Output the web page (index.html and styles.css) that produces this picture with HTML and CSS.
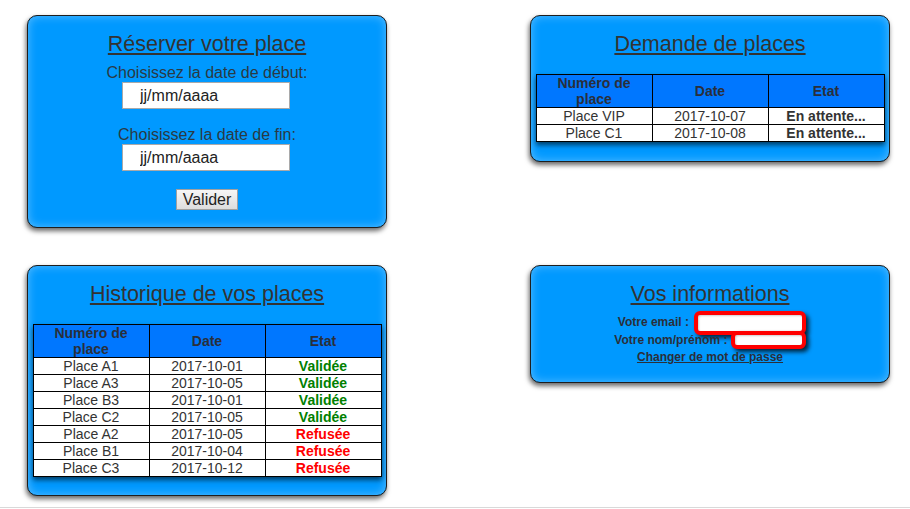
FILE: index.html
```html
<!DOCTYPE html>
<html lang="fr">
<head>
<meta charset="utf-8">
<title>Espace membre</title>
<link rel="stylesheet" href="styles.css">
</head>
<body>
<div class="page">
  <div class="grid">
    <section class="card card-reserve">
      <h2 class="card-title">Réserver votre place</h2>
      <div class="field-label">Choisissez la date de début:</div>
      <input class="date-input" type="text" value="jj/mm/aaaa">
      <div class="field-label field-label-gap">Choisissez la date de fin:</div>
      <input class="date-input" type="text" value="jj/mm/aaaa">
      <div class="btn-row"><button class="btn" type="button">Valider</button></div>
    </section>

    <section class="card card-requests">
      <h2 class="card-title">Demande de places</h2>
      <table class="places">
        <thead>
          <tr><th>Numéro de place</th><th>Date</th><th>Etat</th></tr>
        </thead>
        <tbody>
          <tr><td>Place VIP</td><td>2017-10-07</td><td class="pending">En attente...</td></tr>
          <tr><td>Place C1</td><td>2017-10-08</td><td class="pending">En attente...</td></tr>
        </tbody>
      </table>
    </section>

    <section class="card card-history">
      <h2 class="card-title">Historique de vos places</h2>
      <table class="places">
        <thead>
          <tr><th>Numéro de place</th><th>Date</th><th>Etat</th></tr>
        </thead>
        <tbody>
          <tr><td>Place A1</td><td>2017-10-01</td><td class="ok">Validée</td></tr>
          <tr><td>Place A3</td><td>2017-10-05</td><td class="ok">Validée</td></tr>
          <tr><td>Place B3</td><td>2017-10-01</td><td class="ok">Validée</td></tr>
          <tr><td>Place C2</td><td>2017-10-05</td><td class="ok">Validée</td></tr>
          <tr><td>Place A2</td><td>2017-10-05</td><td class="ko">Refusée</td></tr>
          <tr><td>Place B1</td><td>2017-10-04</td><td class="ko">Refusée</td></tr>
          <tr><td>Place C3</td><td>2017-10-12</td><td class="ko">Refusée</td></tr>
        </tbody>
      </table>
    </section>

    <section class="card card-info">
      <h2 class="card-title">Vos informations</h2>
      <div class="info-line">Votre email : <span class="info-input info-email"></span></div>
      <div class="info-line">Votre nom/prénom : <span class="info-input info-name"></span></div>
      <div class="info-line"><a class="info-link" href="#">Changer de mot de passe</a></div>
    </section>
  </div>
  <div class="bottom-rule"></div>
</div>
</body>
</html>
```

FILE: styles.css
```css
html, body {
  margin: 0;
  padding: 0;
  background: #ffffff;
}

body {
  font-family: "Liberation Sans", Arial, sans-serif;
  color: #333333;
}

.page {
  padding-top: 15px;
}

.grid {
  display: grid;
  grid-template-columns: 360px 360px;
  grid-template-rows: 213px auto;
  column-gap: 143px;
  row-gap: 37px;
  align-items: start;
  padding-left: 27px;
}

.card {
  box-sizing: border-box;
  width: 360px;
  background: #0099ff;
  border: 1px solid #1e1e1e;
  border-radius: 10px;
  box-shadow: -1px 3px 5px rgba(0, 0, 0, 0.6), inset 0 0 10px rgba(255, 255, 255, 0.35);
  padding: 16px 4px 0 4px;
  text-align: center;
}

.card-reserve { height: 213px; }
.card-requests { height: 147px; }
.card-history { height: 231px; }
.card-info { height: 118px; }

.card-title {
  margin: 0;
  font-size: 21.5px;
  line-height: 25px;
  font-weight: normal;
  color: #333333;
  text-decoration: underline;
  text-decoration-thickness: 2px;
  text-underline-offset: 2px;
}

.field-label {
  margin-top: 6px;
  font-size: 16px;
  line-height: 19px;
  color: #2a3a44;
}

.field-label-gap {
  margin-top: 16px;
}

.date-input {
  display: block;
  box-sizing: border-box;
  width: 168px;
  height: 27px;
  margin: 0 auto;
  padding: 0 0 0 17px;
  border: 1px solid #a9a9a9;
  background: #ffffff;
  font-family: "Liberation Sans", Arial, sans-serif;
  font-size: 16px;
  color: #222222;
  outline: none;
  transform: translateX(-1px);
}

.btn-row {
  margin-top: 18px;
}

.btn {
  box-sizing: border-box;
  width: 62px;
  height: 21px;
  padding: 0;
  border: 1px solid #a0a0a0;
  background: linear-gradient(#f6f6f6, #dddddd);
  font-family: "Liberation Sans", Arial, sans-serif;
  font-size: 16px;
  line-height: 19px;
  color: #222222;
}

.places {
  width: 349px;
  margin: 17px auto 0 auto;
  border-collapse: collapse;
  background: #ffffff;
  box-shadow: 0 3px 5px rgba(0, 0, 0, 0.6);
  table-layout: fixed;
  font-size: 14px;
  line-height: 16px;
}

.places th,
.places td {
  border: 1px solid #000000;
  padding: 0;
  text-align: center;
  color: #333333;
}

.places th {
  background: #0077ff;
  font-weight: bold;
  color: #2a2f3a;
  height: 32px;
}

.places th:first-child { padding: 0 12px; }

.places td.pending { font-weight: bold; }
.places td.ok { font-weight: bold; color: #008000; }
.places td.ko { font-weight: bold; color: #ff0000; }

.info-line {
  font-size: 12px;
  font-weight: bold;
  line-height: 17.5px;
  color: #2a2f3a;
}

.card-info .info-line:first-of-type {
  margin-top: 7px;
}

.info-input {
  display: inline-block;
  box-sizing: border-box;
  border: 4px solid #ff0000;
  border-radius: 6px;
  background: #ffffff;
  box-shadow: 3px 3px 4px rgba(0, 0, 0, 0.75), inset 1px 1px 2px rgba(0, 0, 0, 0.2);
  vertical-align: middle;
}

.info-email {
  width: 112px;
  height: 24px;
  margin: -7px -4px -7px 2px;
}

.info-name {
  width: 75px;
  height: 18px;
  margin: -5px 0 -5px 0;
}

.info-link {
  color: #2a2f3a;
  text-decoration: underline;
}

.bottom-rule {
  margin-top: 11px;
  border-top: 1px solid #d9d9d9;
  height: 1px;
}
```
